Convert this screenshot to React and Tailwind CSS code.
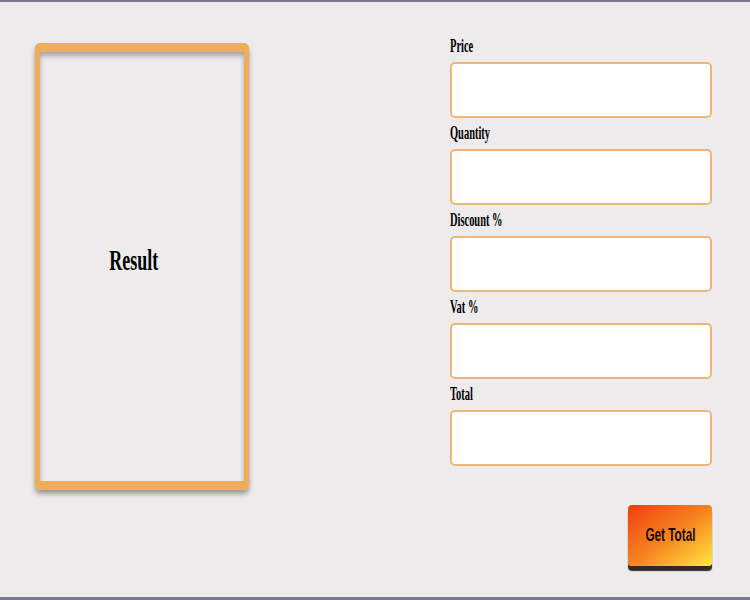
export default function App() {
  const fields = ["Price", "Quantity", "Discount %", "Vat %", "Total"];
  return (
    <div className="h-[600px] w-[750px] overflow-hidden border-t-2 border-b-[3px] border-[#7d7990] bg-[#edebec] font-['Liberation_Serif',serif]">
      <div className="flex">
        <div className="ml-[35px] mt-[41px] w-[214px]">
          <div className="flex h-[447px] items-center justify-center rounded-[5px] border-x-[5px] border-y-[9px] border-[#eead57] pr-[16px] pb-[14px] shadow-[0_4px_5px_rgba(0,0,0,0.35),inset_0_4px_5px_rgba(0,0,0,0.3)]">
            <span className="inline-block scale-x-[0.6] text-[30px] font-bold leading-none text-black">Result</span>
          </div>
        </div>
        <div className="ml-[201px] w-[262px] pt-[34px]">
          <div className="flex flex-col gap-[5px]">
            {fields.map((f) => (
              <div key={f} className="flex flex-col">
                <div className="mb-[6px] h-[20px] text-[18px] font-bold leading-[20px] text-black">
                  <span className="inline-block origin-left scale-x-[0.58] whitespace-nowrap">{f}</span>
                </div>
                <input className="h-[56px] w-[262px] rounded-[5px] border-2 border-[#ecb777] bg-white outline-none" />
              </div>
            ))}
          </div>
          <div className="mt-[39px] flex justify-end">
            <button className="flex h-[61px] w-[84px] items-center justify-center rounded-[4px] bg-gradient-to-br from-[#ee3a10] via-[#f5821f] to-[#fde63f] font-['Liberation_Sans',sans-serif] text-[19px] font-bold text-[#1a0a05] shadow-[0_5px_1px_#2f2a25]">
              <span className="inline-block scale-x-[0.62] whitespace-nowrap">Get Total</span>
            </button>
          </div>
        </div>
      </div>
    </div>
  );
}
